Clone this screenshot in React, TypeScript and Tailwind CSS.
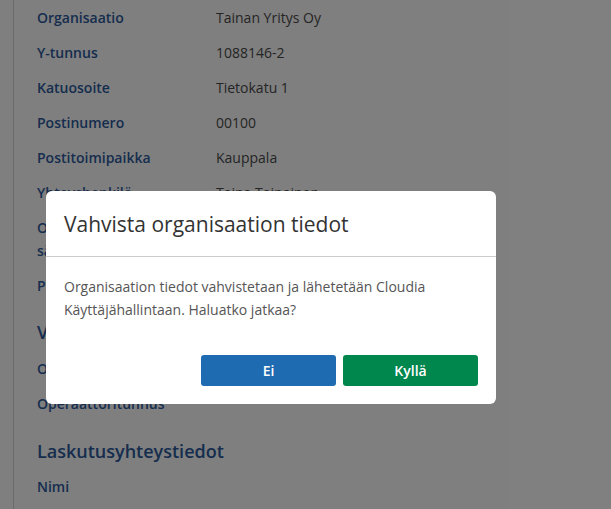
const rows: { label: string; value: string }[] = [
  { label: 'Organisaatio', value: 'Tainan Yritys Oy' },
  { label: 'Y-tunnus', value: '1088146-2' },
  { label: 'Katuosoite', value: 'Tietokatu 1' },
  { label: 'Postinumero', value: '00100' },
  { label: 'Postitoimipaikka', value: 'Kauppala' },
  { label: 'Yhteyshenkilö', value: 'Taina Tainainen' },
  { label: 'Organisaation sähköpostiosoite', value: 'taina@tainanyritys.fi' },
  { label: 'Puhelinnumero', value: '040 1234567' },
];

const einvoice = [
  { label: 'OVT-tunnus', value: '' },
  { label: 'Operaattoritunnus', value: '' },
];

const billing = [{ label: 'Nimi', value: '' }];

function Row({ label, value }: { label: string; value: string }) {
  return (
    <div className="flex py-[6px] text-[14px] leading-[23px]">
      <div className="w-[179px] shrink-0 pr-[10px] font-semibold text-[#2d5a9c]">{label}</div>
      <div className="text-[#4a4a4a]">{value}</div>
    </div>
  );
}

export default function App() {
  return (
    <div
      className="relative h-[509px] w-[611px] overflow-hidden bg-white"
      style={{ fontFamily: '"Open Sans", "Noto Sans", sans-serif' }}
    >
      <div className="ml-[13px] h-full border-l border-[#d6d6d6] pl-[23px]">
        {rows.map((r) => (
          <Row key={r.label} {...r} />
        ))}
        <h2 className="mt-4 mb-[5px] text-[18px] leading-[27px] font-semibold text-[#2d5a9c]">
          Verkkolaskutusosoite
        </h2>
        {einvoice.map((r) => (
          <Row key={r.label} {...r} />
        ))}
        <h2 className="mt-[17px] mb-1 text-[18px] leading-[27px] font-semibold text-[#2d5a9c]">
          Laskutusyhteystiedot
        </h2>
        {billing.map((r) => (
          <Row key={r.label} {...r} />
        ))}
      </div>

      <div className="absolute inset-0 bg-black/50">
        <div className="ml-[46px] mt-[191px] w-[450px] rounded-[6px] bg-white">
          <div className="flex h-[66px] items-center border-b border-[#cccccc] px-[18px]">
            <h1 className="text-[21px] leading-[28px] font-medium text-[#333333]">
              Vahvista organisaation tiedot
            </h1>
          </div>
          <div className="px-[18px] pt-[18px] pb-[18px]">
            <p className="text-[14px] leading-[23px] text-[#555555]">
              Organisaation tiedot vahvistetaan ja lähetetään Cloudia Käyttäjähallintaan. Haluatko jatkaa?
            </p>
            <div className="mt-[34px] flex justify-end gap-[7px]">
              <button className="h-[31px] w-[135px] rounded-[3px] bg-[#1f6bb1] text-[14px] font-semibold text-white">
                Ei
              </button>
              <button className="h-[31px] w-[135px] rounded-[3px] bg-[#00874e] text-[14px] font-semibold text-white">
                Kyllä
              </button>
            </div>
          </div>
        </div>
      </div>
    </div>
  );
}
